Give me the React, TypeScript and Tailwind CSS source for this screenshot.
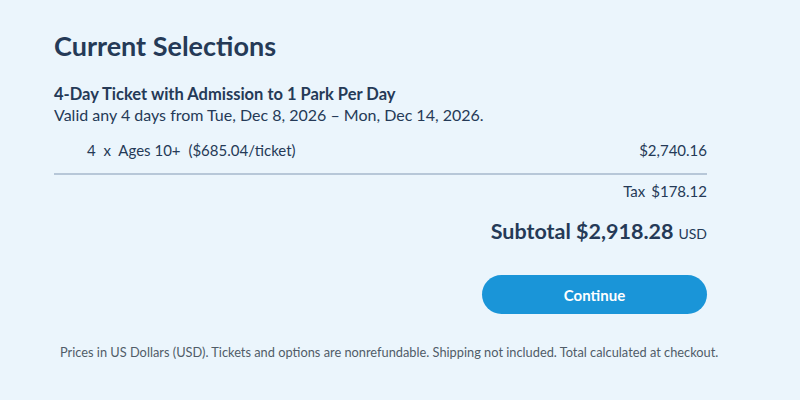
export default function App() {
  return (
    <div
      className="w-[800px] h-[400px] bg-[#ebf5fc] text-[#253a57] overflow-hidden"
      style={{ fontFamily: 'Lato, "Noto Sans", sans-serif' }}
    >
      <div className="pl-[54px] pr-[93px] pt-[30px]">
        <h1 className="text-[27px] leading-[32px] font-bold">Current Selections</h1>

        <div className="mt-[22px]">
          <h2 className="text-[16.5px] leading-[20px] font-bold">4-Day Ticket with Admission to 1 Park Per Day</h2>
          <p className="text-[16px] leading-[22px]">Valid any 4 days from Tue, Dec 8, 2026 – Mon, Dec 14, 2026.</p>
        </div>

        <div className="flex justify-between items-center mt-[12px] h-[24px] text-[15px] pl-[33px]">
          <span>
            4 <span className="mx-[4px]">x</span> Ages 10+ <span className="ml-[4px]">($685.04/ticket)</span>
          </span>
          <span>$2,740.16</span>
        </div>

        <div className="mt-[11px] border-t-2 border-[#b7c7d8]" />

        <div className="flex justify-end mt-[5px] h-[22px] items-center text-[15px]">
          <span>Tax</span>
          <span className="ml-[6px]">$178.12</span>
        </div>

        <div className="flex justify-end items-baseline mt-[13px]">
          <span className="text-[21.5px] font-bold">Subtotal $2,918.28</span>
          <span className="ml-[5px] text-[14px]">USD</span>
        </div>

        <div className="flex justify-end mt-[28px]">
          <button className="w-[225px] h-[39px] rounded-full bg-[#1a95d8] text-white text-[15px] font-bold">
            Continue
          </button>
        </div>
      </div>

      <p className="mt-[29px] pl-[60px] text-[12.8px] text-[#505c68]">
        Prices in US Dollars (USD). Tickets and options are nonrefundable. Shipping not included. Total calculated at checkout.
      </p>
    </div>
  );
}
